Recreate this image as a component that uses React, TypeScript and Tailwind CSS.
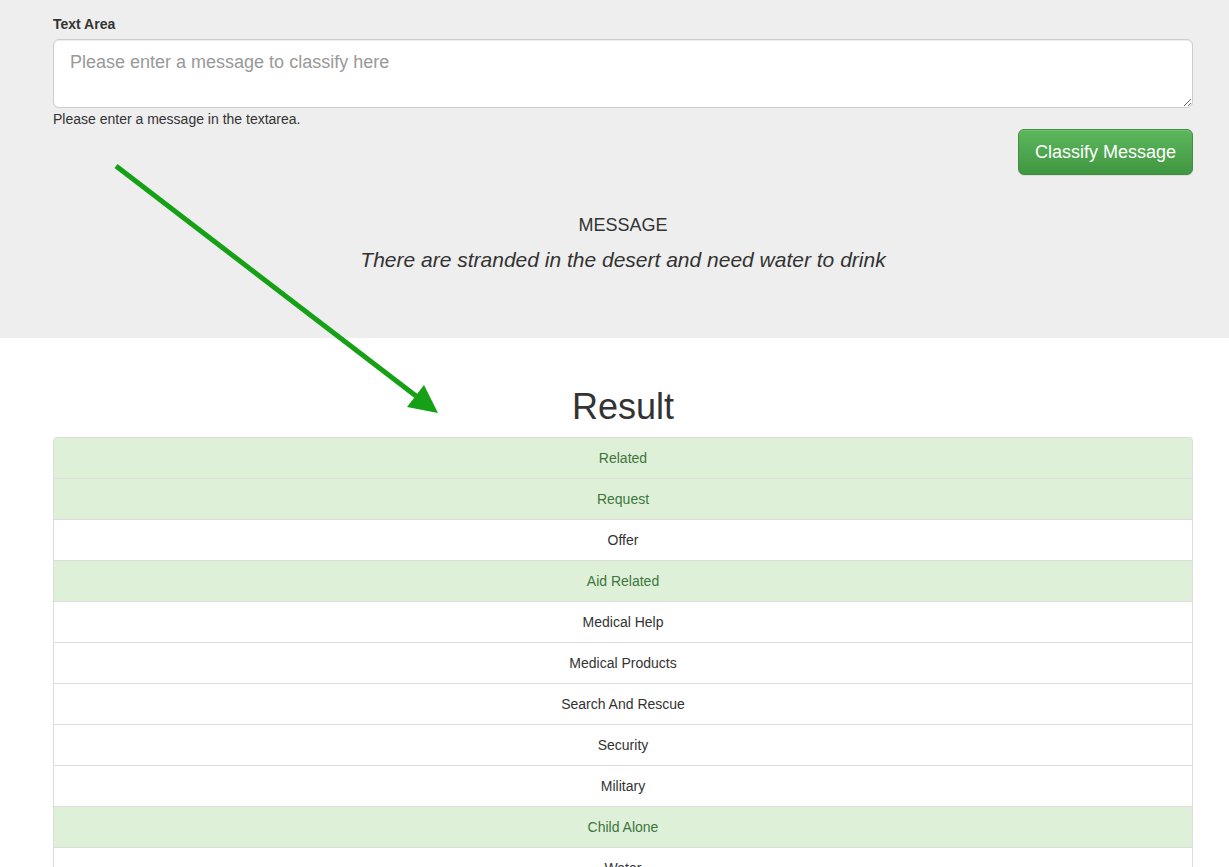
const categories: { name: string; hit: boolean }[] = [
  { name: "Related", hit: true },
  { name: "Request", hit: true },
  { name: "Offer", hit: false },
  { name: "Aid Related", hit: true },
  { name: "Medical Help", hit: false },
  { name: "Medical Products", hit: false },
  { name: "Search And Rescue", hit: false },
  { name: "Security", hit: false },
  { name: "Military", hit: false },
  { name: "Child Alone", hit: true },
  { name: "Water", hit: false },
  { name: "Food", hit: false },
  { name: "Shelter", hit: false },
  { name: "Clothing", hit: false },
  { name: "Money", hit: false },
];

export default function App() {
  return (
    <div className="relative min-h-screen bg-white text-[14px] leading-[20px] text-[#333] font-['Liberation_Sans',Arial,sans-serif]">
      {/* Jumbotron */}
      <div className="bg-[#eee] h-[338px] pt-[14px]">
        <div className="ml-[53px] w-[1140px]">
          <label className="block font-bold mb-[5px]">Text Area</label>
          <textarea
            className="block w-full h-[69px] bg-white border border-[#ccc] rounded-[6px] px-4 py-[10px] text-[18px] leading-[24px] text-[#555] placeholder:text-[#999] shadow-[inset_0_1px_1px_rgba(0,0,0,0.075)] outline-none"
            placeholder="Please enter a message to classify here"
          />
          <p className="mt-[1px]">Please enter a message in the textarea.</p>
          <div className="flex justify-end">
            <button className="h-[46px] px-4 rounded-[6px] text-[18px] text-white border border-[#3e8f3e] bg-gradient-to-b from-[#5cb85c] to-[#419641] shadow-[inset_0_1px_0_rgba(255,255,255,0.15),0_1px_1px_rgba(0,0,0,0.075)]">
              Classify Message
            </button>
          </div>
          <div className="text-center mt-[40px]">
            <h4 className="text-[18px] leading-[20px]">MESSAGE</h4>
            <p className="italic text-[21px] leading-[30px] mt-[10px]">
              There are stranded in the desert and need water to drink
            </p>
          </div>
        </div>
      </div>

      {/* Result */}
      <div className="ml-[53px] w-[1140px] pt-[50px]">
        <h1 className="text-center text-[36px] leading-[38px] mb-[11px]">Result</h1>
        <ul>
          {categories.map((c, i) => (
            <li
              key={c.name}
              className={`text-center px-[15px] py-[10px] border border-[#ddd] -mb-px ${
                i === 0 ? "rounded-t-[4px]" : ""
              } ${c.hit ? "bg-[#dff0d8] text-[#3c763d]" : "bg-white text-[#333]"}`}
            >
              {c.name}
            </li>
          ))}
        </ul>
      </div>

      {/* Annotation arrow */}
      <svg className="absolute left-0 top-0 pointer-events-none" width="1229" height="867">
        <line x1="116" y1="166" x2="416" y2="396" stroke="#16a016" strokeWidth="5" />
        <polygon points="438,413 424,385 407,407" fill="#16a016" />
      </svg>
    </div>
  );
}
